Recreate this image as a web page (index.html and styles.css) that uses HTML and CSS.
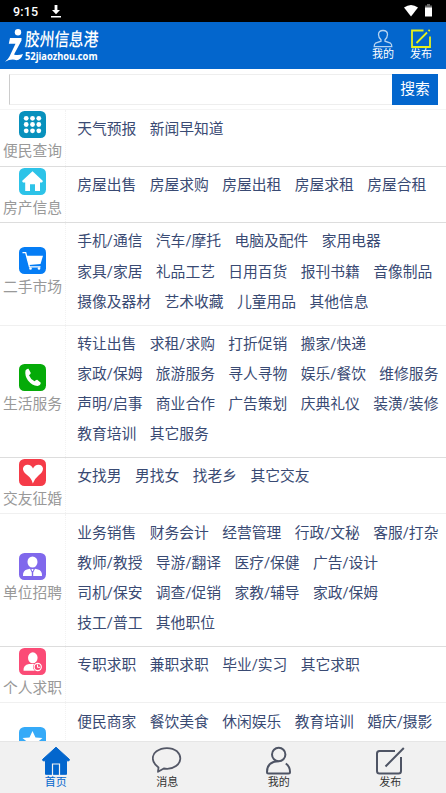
FILE: index.html
```html
<!DOCTYPE html>
<html lang="zh-CN">
<head>
<meta charset="utf-8">
<title>胶州信息港</title>
<link rel="stylesheet" href="styles.css">
</head>
<body>
<div class="status">
  <span class="time">9:15</span>
  <svg class="dl" width="10" height="13" viewBox="0 0 10 13"><path d="M3.600 0h2.800v5H9L5 9.200 1 5h2.600zM0 11h10v1.600H0z" fill="#fff"/></svg>
  <svg class="wifi" width="14" height="12" viewBox="0 0 14 12"><path d="M0 2.600Q7-2.400 14 2.600L7 11.500z" fill="#fff"/></svg>
  <svg class="batt" width="7" height="13" viewBox="0 0 7 13"><path d="M2 0h3v1.500h2V4H0V1.500h2z" fill="#666"/><path d="M0 3.500h7V12.500H0z" fill="#fff"/></svg>
</div>
<header class="header">
  <svg class="mark" width="20" height="34" viewBox="0 0 20 34"><circle cx="13" cy="4.300" r="3.200" fill="#fff"/><path d="M5 10H16.500V12.500L9 26.500Q13 27.800 18 26 16 32 11.500 32.200 6 30.500 0 33.800 3 31.500 4.500 28.500L10.500 15.800H3.800z" fill="#fff"/></svg>
  <div class="brand"><div class="brand-cn">胶州信息港</div><div class="brand-en">52jiaozhou.com</div></div>
  <a class="top-link"><svg width="20" height="19" viewBox="0 0 20 19"><path d="M8 12.200V10.800Q5.500 8.500 5.500 5.500 5.500 1.500 10 1.500T14.500 5.500Q14.500 8.500 12 10.800V12.200L17.500 14.200Q18.800 15 18.800 17.700H1.200Q1.200 15 2.500 14.200Z" fill="none" stroke="#b5d3f1" stroke-width="1.300"/></svg><span>我的</span></a>
  <a class="top-link"><svg width="20" height="19" viewBox="0 0 20 19"><path d="M12.500 1.500H1V18H19V7.500M5.500 14 16 3.500M17.500 2l1.200-1.200" fill="none" stroke="#e6f01c" stroke-width="1.800"/></svg><span>发布</span></a>
</header>
<div class="search"><div class="field"></div><div class="button">搜索</div></div>
<main class="list">
  <section class="row dark">
    <div class="cat"><svg viewBox="0 0 27 27"><rect width="27" height="27" rx="5.500" fill="#0891bd"/><g fill="#fff"><circle cx="7.200" cy="7.300" r="2.400"/><circle cx="13.500" cy="7.300" r="2.400"/><circle cx="19.800" cy="7.300" r="2.400"/><circle cx="7.200" cy="13.500" r="2.400"/><circle cx="13.500" cy="13.500" r="2.400"/><circle cx="19.800" cy="13.500" r="2.400"/><circle cx="7.200" cy="19.800" r="2.400"/><circle cx="13.500" cy="19.800" r="2.400"/><circle cx="19.800" cy="19.800" r="2.400"/></g></svg><span>便民查询</span></div>
    <div class="links"><a>天气预报</a><a>新闻早知道</a></div>
  </section>
  <section class="row dark">
    <div class="cat"><svg viewBox="0 0 27 27"><rect width="27" height="27" rx="5.500" fill="#2dc3e8"/><path d="M13.500 3.200 24 13l-1 1.500h-2V23h-5v-6.800h-5V23H6.200v-8.500H4L3 13z" fill="#fff"/></svg><span>房产信息</span></div>
    <div class="links"><a>房屋出售</a><a>房屋求购</a><a>房屋出租</a><a>房屋求租</a><a>房屋合租</a></div>
  </section>
  <section class="row">
    <div class="cat"><svg viewBox="0 0 27 27"><rect width="27" height="27" rx="5.500" fill="#057df5"/><path d="M7.500 8.800H24L21.500 17 10 18z" fill="#fff"/><path d="M3.500 5.700H6.700L10.500 19.800H21.500" fill="none" stroke="#fff" stroke-width="1.300"/><circle cx="11.500" cy="21.500" r="1.300" fill="#fff"/><circle cx="20" cy="21.500" r="1.300" fill="#fff"/></svg><span>二手市场</span></div>
    <div class="links"><a>手机/通信</a><a>汽车/摩托</a><a>电脑及配件</a><a>家用电器</a><br><a>家具/家居</a><a>礼品工艺</a><a>日用百货</a><a>报刊书籍</a><a>音像制品</a><br><a>摄像及器材</a><a>艺术收藏</a><a>儿童用品</a><a>其他信息</a></div>
  </section>
  <section class="row dark">
    <div class="cat"><svg viewBox="0 0 27 27"><rect width="27" height="27" rx="5.500" fill="#05ab08"/><path d="M6.500 6.500Q8 4.300 9.500 4.800L11.800 9Q11.500 10.500 10 11.300 11.500 15.300 15.500 17.300 17 15.500 18.200 15.700L21.800 18.800Q21.500 21.500 18.500 22 13 21.500 9 16.500 5.500 11.500 6.500 6.500z" fill="#fff"/></svg><span>生活服务</span></div>
    <div class="links"><a>转让出售</a><a>求租/求购</a><a>打折促销</a><a>搬家/快递</a><br><a>家政/保姆</a><a>旅游服务</a><a>寻人寻物</a><a>娱乐/餐饮</a><a>维修服务</a><br><a>声明/启事</a><a>商业合作</a><a>广告策划</a><a>庆典礼仪</a><a>装潢/装修</a><br><a>教育培训</a><a>其它服务</a></div>
  </section>
  <section class="row">
    <div class="cat"><svg viewBox="0 0 27 27"><rect width="27" height="27" rx="5.500" fill="#f53b48"/><path d="M13.800 24.500Q12.800 19.500 7.500 15.500 3.500 12.200 4 9.200 5 5.500 8.800 5.700 12.500 6 14 9.500 15.500 6 19.500 5.700 23.500 6 24 9.500 24 13 20 16 15.200 20 13.800 24.500z" fill="#fff"/></svg><span>交友征婚</span></div>
    <div class="links"><a>女找男</a><a>男找女</a><a>找老乡</a><a>其它交友</a></div>
  </section>
  <section class="row dark">
    <div class="cat"><svg viewBox="0 0 27 27"><rect width="27" height="27" rx="5.500" fill="#8068ec"/><ellipse cx="13.500" cy="9" rx="5" ry="5.500" fill="#fff"/><path d="M4 23Q3.700 17.500 8 16.500L11 15.800 12.800 19.500V23zM23 23Q23.300 17.500 19 16.500L16 15.800 14.200 19.500V23z" fill="#fff"/><path d="M12.500 16h2l-.5 2h-1z" fill="#fff"/></svg><span>单位招聘</span></div>
    <div class="links"><a>业务销售</a><a>财务会计</a><a>经营管理</a><a>行政/文秘</a><a>客服/打杂</a><br><a>教师/教授</a><a>导游/翻译</a><a>医疗/保健</a><a>广告/设计</a><br><a>司机/保安</a><a>调查/促销</a><a>家教/辅导</a><a>家政/保姆</a><br><a>技工/普工</a><a>其他职位</a></div>
  </section>
  <section class="row">
    <div class="cat"><svg viewBox="0 0 27 27"><rect width="27" height="27" rx="5.500" fill="#fb4b76"/><ellipse cx="13.800" cy="9.800" rx="4.800" ry="5.500" fill="#fff"/><path d="M4.500 22.800Q4 17 10 16L18 16V22.800z" fill="#fff"/><circle cx="18.700" cy="19" r="4.700" fill="#fb4b76"/><circle cx="18.700" cy="19" r="3.600" fill="#fb4b76" stroke="#fff" stroke-width="1.200"/><path d="M18.500 16.500V19.300H21" fill="none" stroke="#fff"/></svg><span>个人求职</span></div>
    <div class="links"><a>专职求职</a><a>兼职求职</a><a>毕业/实习</a><a>其它求职</a></div>
  </section>
  <section class="row last">
    <div class="cat"><svg viewBox="0 0 27 27"><rect width="27" height="27" rx="5.500" fill="#35aaf8"/><path d="M13.500 4 16.500 10.500 23.500 11 18 15.500 20 22.500 13.500 18.500 7 22.500 9 15.500 3.500 11 10.500 10.500z" fill="#fff"/></svg></div>
    <div class="links"><a>便民商家</a><a>餐饮美食</a><a>休闲娱乐</a><a>教育培训</a><a>婚庆/摄影</a></div>
  </section>
</main>
<nav class="tabs">
  <a class="tab active"><svg width="30" height="30" viewBox="0 0 30 30"><path d="M15 1.200 28.500 13.500 28 14.800H25.500V28.300H4.500V14.800H2L1.500 13.500z" fill="#0366cd" stroke="#0366cd" stroke-linejoin="round"/><path d="M11.500 29V18H18.500V29" fill="none" stroke="#f1f1f1" stroke-width="1.200"/></svg><span>首页</span></a>
  <a class="tab"><svg width="30" height="30" viewBox="0 0 30 30"><path d="M6.500 21.500C-1 16-.5 9 4.500 5.300 10.500 1 19.500 1 25 5.300 30 10 29 16.500 24 20 20 22.800 15 23.200 11.800 22.500L6 25.800z" fill="none" stroke="#535766" stroke-width="1.800" stroke-linejoin="round"/></svg><span>消息</span></a>
  <a class="tab"><svg width="30" height="30" viewBox="0 0 30 30"><circle cx="14.700" cy="8.500" r="6.700" fill="none" stroke="#4e5464" stroke-width="2"/><path d="M14.500 15.200Q3 15.500 3 26 3 27.500 4.500 27.500H24.500Q26 27.500 26 26 26 20.500 21.800 17.500" fill="none" stroke="#4e5464" stroke-width="2"/></svg><span>我的</span></a>
  <a class="tab"><svg width="30" height="30" viewBox="0 0 30 30"><path d="M20 5H4.500Q2 5 2 7.500V25Q2 27.500 4.500 27.500H23.500Q26 27.500 26 25V11M10.500 20.500 28.800 2" fill="none" stroke="#4e5464" stroke-width="2"/></svg><span>发布</span></a>
</nav>
</body>
</html>
```
FILE: styles.css
```css
* { box-sizing: border-box; }
body {
  margin: 0;
  width: 446px;
  height: 793px;
  overflow: hidden;
  display: flex;
  flex-direction: column;
  background: #fff;
  font-family: Roboto, "Noto Sans CJK SC", sans-serif;
}
svg { display: block; flex: none; }
.status {
  flex: none;
  height: 22px;
  background: #000;
  color: #fff;
  display: flex;
  align-items: flex-start;
  padding: 5px 14px 0 13px;
}
.time { width: 38px; font-size: 12.5px; font-weight: 500; line-height: 14px; letter-spacing: .2px; }
.wifi { margin-left: auto; margin-right: 7px; }
.batt { margin-top: -1px; }
.header {
  flex: none;
  height: 47px;
  background: #0366cd;
  color: #fff;
  display: flex;
  align-items: flex-start;
  padding: 6px 13px 0 5px;
}
.brand { width: 75px; margin-right: auto; white-space: nowrap; }
.brand-cn { height: 23px; font-size: 14.7px; line-height: 24px; font-weight: 500; transform: scaleY(1.25) skewX(-5deg); }
.brand-en { font: bold 9.3px/12px "Open Sans", "Noto Sans", sans-serif; transform: scaleY(1.15); }
.top-link { width: 24px; margin-left: 14px; display: flex; flex-direction: column; align-items: center; }
.top-link svg { margin-top: 1px; }
.top-link span { font-size: 11px; line-height: 14px; white-space: nowrap; }
.search { flex: none; height: 41px; padding: 5px 8px 0 9px; display: flex; border-bottom: 1px solid #f5f5f5; }
.field { flex: 1; height: 31px; border: 1px solid #eee; border-left-color: #ccc; border-right: 0; }
.button { width: 46px; height: 31px; background: #0366cd; color: #fff; font-size: 14.8px; line-height: 30px; text-align: center; }
.list { flex: 1; min-height: 0; overflow: hidden; padding-top: .4px; }
.row { display: flex; min-height: 56.45px; border-bottom: 1px solid #f0f0f0; }
.row.dark { border-bottom-color: #ddd; }
.row.last { border-bottom: 0; }
.cat {
  flex: none;
  width: 66px;
  border-right: 1px dotted #f2f2f2;
  display: flex;
  flex-direction: column;
  align-items: center;
  justify-content: center;
  font-size: 14.78px;
  line-height: 27px;
  color: #999;
}
.cat svg { width: 27px; height: 27px; }
.last .cat { justify-content: flex-start; padding-top: 24px; }
.links { flex: 1; min-width: 0; padding: 3.200px 0 7.300px 11.300px; font-size: 14.78px; line-height: 30.250px; color: #394a73; white-space: nowrap; }
.links a { margin-right: 13.400px; }
.links a:last-child { margin-right: 0; }
.tabs { flex: none; height: 52px; background: #f1f1f1; border-top: 1px solid #e6e6e6; display: flex; }
.tab { flex: 1; padding-top: 4px; display: flex; flex-direction: column; align-items: center; color: #333; }
.tab span { font-size: 11px; line-height: 14px; }
.tab.active { color: #0366cd; }
```
